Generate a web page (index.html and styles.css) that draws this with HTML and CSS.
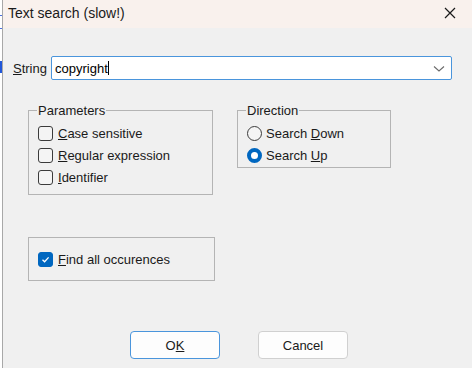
FILE: index.html
```html
<!DOCTYPE html>
<html lang="en">
<head>
    <meta charset="UTF-8">
    <title>Text search (slow!)</title>
    <link rel="stylesheet" href="styles.css">
</head>
<body>
    <div class="backdrop">
        <div class="mark mark-1"></div>
        <div class="mark mark-2"></div>
        <div class="mark mark-3"></div>
    </div>
    <div class="window">
        <div class="title-bar">
            <span class="title">Text search (slow!)</span>
            <svg class="close" width="12" height="12" viewBox="0 0 12 12">
                <path d="M1 1 L11 11 M11 1 L1 11" stroke="#1a1a1a" stroke-width="1.2" fill="none"/>
            </svg>
        </div>
        <div class="content">
            <div class="string-row">
                <label class="string-label"><u>S</u>tring</label>
                <div class="combo">
                    <span class="combo-text">copyright</span><span class="caret"></span>
                    <svg class="chevron" width="12" height="8" viewBox="0 0 12 8">
                        <path d="M1 1.5 L6 6 L11 1.5" stroke="#6b6b6b" stroke-width="1.1" fill="none"/>
                    </svg>
                </div>
            </div>

            <div class="groups">
                <fieldset class="group group-params">
                    <legend>Parameters</legend>
                    <div class="option"><span class="check"></span><span><u>C</u>ase sensitive</span></div>
                    <div class="option"><span class="check"></span><span><u>R</u>egular expression</span></div>
                    <div class="option"><span class="check"></span><span><u>I</u>dentifier</span></div>
                </fieldset>
                <fieldset class="group group-direction">
                    <legend>Direction</legend>
                    <div class="option"><span class="radio"></span><span>Search <u>D</u>own</span></div>
                    <div class="option"><span class="radio radio-on"></span><span>Search <u>U</u>p</span></div>
                </fieldset>
            </div>

            <div class="find-box">
                <div class="option">
                    <span class="check check-on">
                        <svg width="11" height="11" viewBox="0 0 11 11">
                            <path d="M2.5 5.8 L4.6 7.8 L8.6 3.4" stroke="#fff" stroke-width="1.3" fill="none"/>
                        </svg>
                    </span><span><u>F</u>ind all occurences</span>
                </div>
            </div>

            <div class="buttons">
                <button class="btn btn-default">O<u>K</u></button>
                <button class="btn">Cancel</button>
            </div>
        </div>
    </div>
</body>
</html>
```

FILE: styles.css
```css
html, body {
    margin: 0;
    padding: 0;
    height: 100%;
}
body {
    display: flex;
    background-color: #ffffff;
    font-family: 'Liberation Sans', Arial, sans-serif;
    font-size: 13px;
    color: #000;
    overflow: hidden;
}
.backdrop {
    width: 2px;
    display: flex;
    flex-direction: column;
}
.mark {
    background-color: #4a6fe0;
}
.mark-1 {
    height: 1px;
    margin-top: 15px;
}
.mark-2 {
    height: 1px;
    margin-top: 12px;
}
.mark-3 {
    height: 12px;
    margin-top: 32px;
    background-color: #2157d9;
}
.window {
    flex: 1;
    border-left: 1px solid #a8a8a8;
    background-color: #f0f0f0;
    display: flex;
    flex-direction: column;
}
.title-bar {
    height: 28px;
    background-color: #f9f1ed;
    display: flex;
    align-items: center;
    justify-content: space-between;
    padding: 0 16px 0 5px;
}
.title {
    font-size: 14px;
    color: #1a1a1a;
    margin-top: -3px;
}
.close {
    margin-top: -3px;
}
.content {
    padding: 28px 20px 0 10px;
}
.string-row {
    display: flex;
    align-items: center;
}
.string-label {
    width: 38px;
    margin-top: 1px;
    color: #1a1a1a;
}
.combo {
    flex: 1;
    height: 24px;
    box-sizing: border-box;
    border: 1px solid #4a95dc;
    border-radius: 2px;
    background-color: #fff;
    display: flex;
    align-items: center;
    padding: 0 6px 0 3px;
}
.combo-text {
    font-size: 13px;
}
.caret {
    width: 1px;
    height: 14px;
    background-color: #000;
}
.chevron {
    margin-left: auto;
    margin-top: 1px;
}
.groups {
    display: flex;
    align-items: flex-start;
    gap: 24px;
    margin: 23px 0 0 15px;
}
.group {
    margin: 0;
    border: 1px solid #b4b4b4;
    padding: 4px 10px 7px 9px;
}
.group legend {
    padding: 0 1px;
    margin-left: -1px;
    line-height: 15px;
    color: #1a1a1a;
}
.group-params {
    width: 185px;
    box-sizing: border-box;
    padding-bottom: 6px;
}
.group-direction {
    width: 154px;
    box-sizing: border-box;
    padding-bottom: 1px;
}
.option {
    display: flex;
    align-items: center;
    height: 22px;
    color: #1a1a1a;
}
.check {
    width: 13px;
    height: 13px;
    border: 1px solid #3b3b3b;
    border-radius: 3px;
    margin-right: 5px;
    display: flex;
    align-items: center;
    justify-content: center;
    background-color: #f4f4f4;
}
.check-on {
    background-color: #0067c0;
    border-color: #0067c0;
}
.radio {
    width: 13px;
    height: 13px;
    border: 1px solid #3b3b3b;
    border-radius: 50%;
    margin-right: 4px;
    box-sizing: content-box;
    background-color: #f4f4f4;
}
.radio-on {
    background-color: #fff;
    border: 4px solid #0067c0;
    width: 7px;
    height: 7px;
}
.find-box {
    width: 187px;
    height: 44px;
    box-sizing: border-box;
    border: 1px solid #b4b4b4;
    margin: 42px 0 0 15px;
    padding: 0 0 0 9px;
    display: flex;
    align-items: center;
}
.buttons {
    display: flex;
    gap: 38px;
    margin: 50px 0 0 117px;
}
.btn {
    width: 90px;
    height: 28px;
    font-family: 'Liberation Sans', Arial, sans-serif;
    font-size: 13px;
    color: #1a1a1a;
    background-color: #fdfdfd;
    border: 1px solid #d0d0d0;
    border-radius: 4px;
    padding: 0;
}
.btn-default {
    border-color: #4a95dc;
}
```
